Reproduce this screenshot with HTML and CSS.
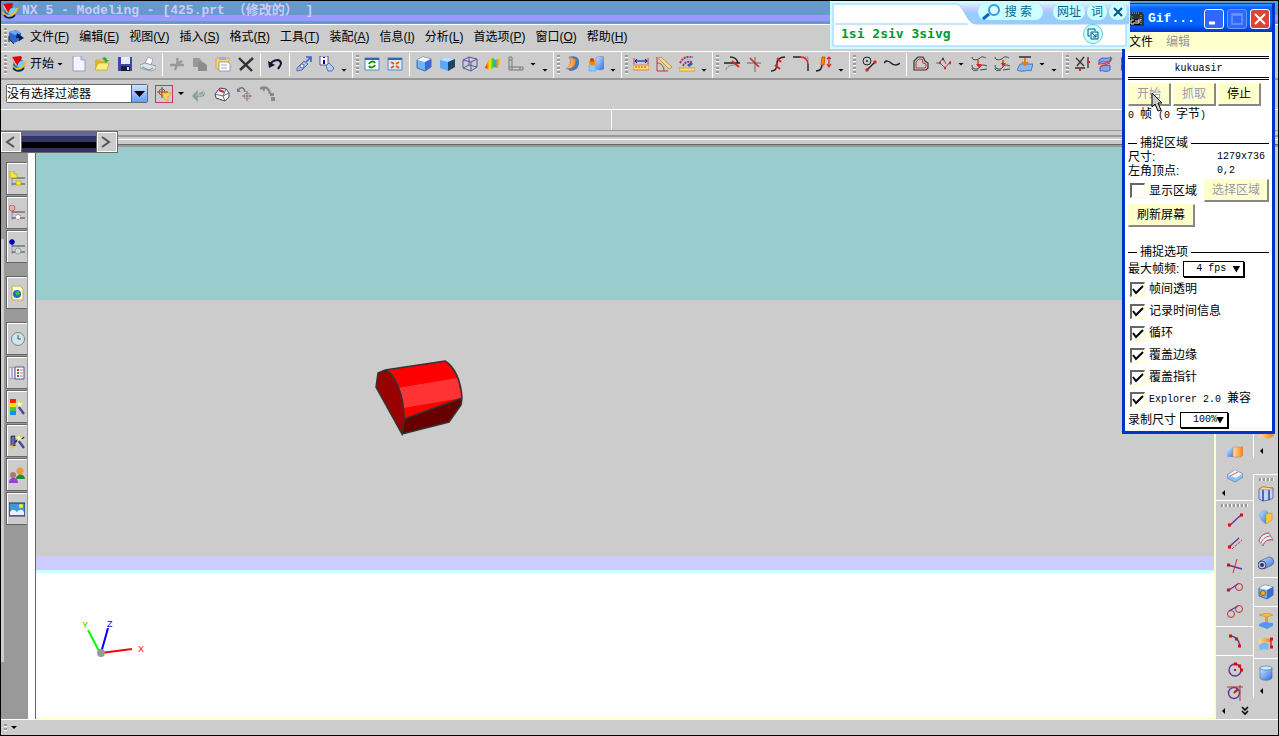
FILE: index.html
```html
<!DOCTYPE html>
<html lang="zh-CN">

<head>
    <meta charset="UTF-8">
    <meta name="viewport" content="width=device-width, initial-scale=1.0">
    <title>NX 5 - Modeling</title>
    <link rel="stylesheet" href="styles.css">
</head>

<body>
    <!-- 公用图形 -->
    <svg class="defs" width="0" height="0" aria-hidden="true">
        <defs>
            <linearGradient id="blue" x1="0" y1="0" x2="1" y2="1">
                <stop offset="0" stop-color="#cce6ff" />
                <stop offset="1" stop-color="#2f6fe0" />
            </linearGradient>
            <linearGradient id="orange" x1="0" y1="0" x2="1" y2="0">
                <stop offset="0" stop-color="#ffe0a0" />
                <stop offset="1" stop-color="#f08020" />
            </linearGradient>
            <linearGradient id="rainbow" x1="0" y1="0" x2="1" y2="0">
                <stop offset="0" stop-color="#f00" />
                <stop offset=".3" stop-color="#fe0" />
                <stop offset=".5" stop-color="#3c3" />
                <stop offset=".65" stop-color="#39f" />
                <stop offset=".8" stop-color="#f90" />
                <stop offset="1" stop-color="#ee0" />
            </linearGradient>
            <linearGradient id="ime-bg" x1="0" y1="0" x2="0" y2="1">
                <stop offset="0" stop-color="#ccffff" />
                <stop offset=".3" stop-color="#ccccff" />
                <stop offset=".5" stop-color="#99ccff" />
                <stop offset="1" stop-color="#99ccff" />
            </linearGradient>
            <symbol id="nx" viewBox="0 0 16 16">
                <circle cx="8" cy="9" r="6" fill="#27a" />
                <path d="M8 6l5-2 1 4-4 4-4-1z" fill="#7cf" />
                <path d="M1 9c2 6 12 5 14-4" fill="none" stroke="#fb2" stroke-width="2" />
                <path d="M2 12c3 4 8 4 11 0" fill="none" stroke="#024" stroke-width="1.5" />
                <path d="M1 1l9-1 1 2-5 7z" fill="#d00" />
                <path d="M1 1l5 8-1 1-4-6z" fill="#f9b" />
            </symbol>
            <symbol id="cube" viewBox="0 0 16 16">
                <path d="M1 4l6-3 8 2v8l-6 4-8-3z" fill="#6cb4ff" stroke="#357" stroke-width=".8" />
                <path d="M1 4l6-3 8 2-6 3z" fill="#f0faff" />
                <path d="M9 6l6-3v8l-6 4z" fill="#3a6cd8" />
            </symbol>
            <symbol id="wand" viewBox="0 0 16 16">
                <path d="M9 7l6 8" stroke="#44a" stroke-width="2.4" />
                <path d="M10 0l1 4 4-1-3 3 2 3-3-2-3 2 1-3-3-2 3 0z" fill="#ffc" stroke="#cc6" stroke-width=".5" />
            </symbol>
        </defs>
    </svg>

    <div class="titlebar">
        <svg class="ico"><use href="#nx" /></svg>
        <h1>NX 5 - Modeling - [425.prt （修改的） ]</h1>
    </div>

    <div class="menubar">
        <span class="grip"></span>
        <svg class="ico" viewBox="0 0 16 16"><path d="M1 3l7-2 5 3v7l-7 3-5-3z" fill="#36c" /><path d="M1 3l7-2 5 3-6 2z" fill="#6af" /><path d="M9 4l7 5-5 3v-3H8z" fill="#024" /><path d="M2 11l4 4M1 7v6" stroke="#024" /></svg>
        <nav>
            <a href="#">文件(<u>F</u>)</a>
            <a href="#">编辑(<u>E</u>)</a>
            <a href="#">视图(<u>V</u>)</a>
            <a href="#">插入(<u>S</u>)</a>
            <a href="#">格式(<u>R</u>)</a>
            <a href="#">工具(<u>T</u>)</a>
            <a href="#">装配(<u>A</u>)</a>
            <a href="#">信息(<u>I</u>)</a>
            <a href="#">分析(<u>L</u>)</a>
            <a href="#">首选项(<u>P</u>)</a>
            <a href="#">窗口(<u>O</u>)</a>
            <a href="#">帮助(<u>H</u>)</a>
        </nav>
    </div>

    <div class="toolbar">
        <div class="group">
            <span class="grip"></span>
            <button class="start"><svg class="ico"><use href="#nx" /></svg>开始<i class="arrow"></i></button>
            <button class="tool" aria-label="新建"><svg class="ico" viewBox="0 0 16 16"><path d="M2 0h8l4 4v11H2z" fill="#f4f6ff" stroke="#99c" /><path d="M10 0v4h4" fill="#ccd8f8" stroke="#99c" /></svg></button>
            <button class="tool" aria-label="打开"><svg class="ico" viewBox="0 0 16 16"><path d="M1 14V4l4-1 2 2h6v9z" fill="#e0b030" /><path d="M1 14l3-7h11l-2 7z" fill="#ffee80" stroke="#c90" stroke-width=".6" /><path d="M8 3c2-3 5-2 5 1l2 0-3 3-2-3z" fill="#3a3" /></svg></button>
            <button class="tool" aria-label="保存"><svg class="ico" viewBox="0 0 16 16"><path d="M1 1h14v14H1z" fill="#44a" /><path d="M4 1h9v7H4z" fill="#e4eeff" /><path d="M4 10h9v5H4z" fill="#123" /><path d="M10 11h2v3h-2z" fill="#ddd" /></svg></button>
            <button class="tool" aria-label="打印"><svg class="ico" viewBox="0 0 16 16"><path d="M5 7l3-6 5 2-2 6z" fill="#fff" stroke="#9ab" /><path d="M0 9l5-2 11 3v3l-5 2-11-3z" fill="#dde2e8" stroke="#789" stroke-width=".7" /><path d="M2 11l7 3 4-2" stroke="#699" fill="none" /></svg></button>
            <span class="sep"></span>
            <button class="tool" aria-label="剪切"><svg class="ico" viewBox="0 0 16 16"><path d="M1 9h14M8 2c2 4 0 7-2 12M13 5l-7 5" stroke="#999" stroke-width="2.4" fill="none" /></svg></button>
            <button class="tool" aria-label="复制"><svg class="ico" viewBox="0 0 16 16"><path d="M1 2h6l3 3v6H1z" fill="#999" /><path d="M6 6h5l4 3v6H6z" fill="#8c8c8c" /></svg></button>
            <button class="tool" aria-label="粘贴"><svg class="ico" viewBox="0 0 16 16"><path d="M1 2h13v11H1z" fill="#f4d860" stroke="#ca6" /><path d="M4 1h7v3H4z" fill="#aac" /><path d="M4 6h9l2 2v7H4z" fill="#fff" stroke="#88a" stroke-width=".8" /><path d="M6 9h6M6 12h6" stroke="#9ac" /></svg></button>
            <button class="tool" aria-label="删除"><svg class="ico" viewBox="0 0 16 16"><path d="M1 2l13 13M15 2L2 14" stroke="#333" stroke-width="2.4" /></svg></button>
            <span class="sep"></span>
            <button class="tool" aria-label="撤消"><svg class="ico" viewBox="0 0 16 16"><path d="M3 8c4-5 10-5 11-1 0 3-2 4-3 6" fill="none" stroke="#113" stroke-width="2" /><path d="M1 5l1 7 6-3z" fill="#113" /></svg></button>
            <span class="sep"></span>
            <button class="tool" aria-label="对象"><svg class="ico" viewBox="0 0 16 16"><path d="M1 12l7-7 4 3-6 6-5 1z" fill="#9ac0f8" stroke="#558" stroke-width=".8" /><path d="M10 6l4-4M10 1h5v5" stroke="#36c" stroke-width="1.6" fill="none" /><circle cx="6" cy="10" r="2" fill="#fff" stroke="#46a" /></svg></button>
            <button class="tool" aria-label="信息"><svg class="ico" viewBox="0 0 16 16"><path d="M1 0h8v9H1z" fill="#fff" stroke="#558" /><path d="M5 1v1M5 4v4" stroke="#00a" stroke-width="2" /><path d="M7 10l3-3 5 5-2 3-4 0z" fill="#acd0ff" stroke="#558" stroke-width=".8" /></svg></button>
            <i class="arrow more"></i>
        </div>
        <div class="group">
            <span class="grip"></span>
            <button class="tool" aria-label="刷新"><svg class="ico" viewBox="0 0 16 16"><path d="M1 2h14v12H1z" fill="#fff" stroke="#58c" /><path d="M1 2h14v2H1z" fill="#36b" /><path d="M5 8c1-3 5-3 6-1M11 9c-1 3-5 3-6 1" stroke="#090" stroke-width="2" fill="none" /></svg></button>
            <button class="tool" aria-label="适合窗口"><svg class="ico" viewBox="0 0 16 16"><path d="M1 2h14v12H1z" fill="#d8ecff" stroke="#58c" /><path d="M1 2h14v2H1z" fill="#36b" /><path d="M4 6l3 2M12 6L9 8M4 12l3-2M12 12l-3-2" stroke="#e50" stroke-width="2" /></svg></button>
            <span class="sep"></span>
            <button class="tool" aria-label="带边着色"><svg class="ico"><use href="#cube" /></svg></button>
            <button class="tool" aria-label="着色"><svg class="ico" viewBox="0 0 16 16"><path d="M1 4l6-3 9 2v8l-7 4-8-3z" fill="#5aa8ff" /><path d="M1 4l6-3 9 2-7 3z" fill="#b8e0ff" /><path d="M9 6l7-3v8l-7 4z" fill="#246" /></svg></button>
            <button class="tool" aria-label="线框"><svg class="ico" viewBox="0 0 16 16"><path d="M1 4l6-3 8 2v8l-6 4-8-3zM1 4l8 2 6-3M9 6v9M7 1v8l8 2M7 9l-6 3" fill="none" stroke="#55a" /></svg></button>
            <button class="tool" aria-label="面分析"><svg class="ico" viewBox="0 0 16 16"><path d="M0 12l4-9 4-1 2 2 6-2-3 10-4-1-4 3z" fill="url(#rainbow)" /></svg></button>
            <button class="tool" aria-label="视图方位"><svg class="ico" viewBox="0 0 16 16"><path d="M1 1h3v10h11v3H1zM1 4h3M1 11h3M4 11v3M12 11v3" fill="none" stroke="#777" /></svg></button>
            <i class="arrow drop"></i><i class="arrow more"></i>
        </div>
        <div class="group">
            <span class="grip"></span>
            <button class="tool" aria-label="曲面"><svg class="ico" viewBox="0 0 16 16"><path d="M4 1c6-2 11 1 10 6 0 5-4 8-9 8l-3-3c4-2 5-6 2-11z" fill="#47b" /><path d="M4 1l7 2c0 4-1 7-4 9l-6 1c4-3 6-7 3-12z" fill="url(#orange)" stroke="#b63" stroke-width=".6" /></svg></button>
            <button class="tool" aria-label="实体"><svg class="ico" viewBox="0 0 16 16"><path d="M8 2l3-2 5 1v12l-4 1-4-1z" fill="url(#blue)" stroke="#77b" stroke-width=".6" /><path d="M1 9h7v6H1z" fill="#8cf" stroke="#79c" stroke-width=".6" /><path d="M1 7c0-4 5-5 6-2v4H2z" fill="#f80" /><circle cx="4" cy="4" r="2" fill="#c40" /></svg></button>
            <i class="arrow more"></i>
        </div>
        <div class="group">
            <span class="grip"></span>
            <button class="tool" aria-label="测量距离"><svg class="ico" viewBox="0 0 16 16"><path d="M1 2v6M15 2v6" stroke="#c33" /><path d="M2 5h12M4 3L2 5l2 2M12 3l2 2-2 2" fill="none" stroke="#00a" /><path d="M0 9h16v5H0z" fill="#fd7" stroke="#c73" stroke-width=".8" /><path d="M3 10v2M6 10v2M9 10v2M12 10v2" stroke="#c50" /></svg></button>
            <button class="tool" aria-label="测量角度"><svg class="ico" viewBox="0 0 16 16"><path d="M1 1v14h11M1 7c4 0 7 3 7 8" fill="none" stroke="#c33" /><path d="M2 2l3-1 11 10-3 2z" fill="#fd7" stroke="#986" stroke-width=".8" /></svg></button>
            <button class="tool" aria-label="分析"><svg class="ico" viewBox="0 0 16 16"><path d="M1 7c3-5 6-7 13-6l-2 6-5-1-3 4z" fill="#9cf" /><path d="M1 7c3-5 6-7 13-6M4 10c2-4 5-5 9-4" fill="none" stroke="#b33" stroke-dasharray="2 1" stroke-width="2" /><path d="M8 9l4-3 2 2-4 3z" fill="#35a" /><path d="M0 12h16v3H0z" fill="#fd7" stroke="#a83" stroke-width=".6" /></svg></button>
            <i class="arrow more"></i>
        </div>
        <div class="group">
            <span class="grip"></span>
            <button class="tool" aria-label="修剪曲线"><svg class="ico" viewBox="0 0 16 16"><path d="M6 1c4 0 7 2 8 6M0 7h16" fill="none" stroke="#222" stroke-width="1.4" /><path d="M2 14c1-4 4-5 9-5" fill="none" stroke="#888" /><path d="M8 5l7 6" stroke="#d22" stroke-width="1.8" /></svg></button>
            <button class="tool" aria-label="修剪拐角"><svg class="ico" viewBox="0 0 16 16"><path d="M8 1v15M0 7h14" stroke="#666" /><path d="M3 2l9 9" stroke="#d22" stroke-width="1.6" /></svg></button>
            <button class="tool" aria-label="分割曲线"><svg class="ico" viewBox="0 0 16 16"><path d="M1 15c4 0 6-2 6-7s3-7 8-7" fill="none" stroke="#222" stroke-width="1.4" /><path d="M7 2l4 4M5 9l5 4" stroke="#d22" stroke-width="2" /></svg></button>
            <button class="tool" aria-label="圆角"><svg class="ico" viewBox="0 0 16 16"><path d="M0 1h8M15 8v7" stroke="#222" stroke-width="1.4" /><path d="M7 1c5 0 8 3 8 8" fill="none" stroke="#d22" stroke-width="1.6" /><path d="M10 1h5v6" fill="none" stroke="#777" stroke-dasharray="1 1" /></svg></button>
            <button class="tool" aria-label="拉长"><svg class="ico" viewBox="0 0 16 16"><path d="M0 15c5 0 6-3 6-7" fill="none" stroke="#222" stroke-width="1.6" /><path d="M6 1h3L8 9H5z" fill="#f80" stroke="#c40" stroke-width=".8" /><path d="M13 1v9M11 3l2-2 2 2M11 8l2 3 2-3" fill="none" stroke="#d22" stroke-width="1.2" /></svg></button>
            <i class="arrow more"></i>
        </div>
        <div class="group">
            <span class="grip"></span>
            <button class="tool" aria-label="偏置"><svg class="ico" viewBox="0 0 16 16"><circle cx="6" cy="5" r="4" fill="none" stroke="#222" /><path d="M5 5h2M6 4v2" stroke="#222" /><path d="M6 14l8-8" stroke="#222" stroke-width="1.5" /><circle cx="14" cy="6" r="1.7" fill="#d22" /><circle cx="6" cy="14" r="1.7" fill="#d22" /></svg></button>
            <button class="tool" aria-label="样条"><svg class="ico" viewBox="0 0 16 16"><path d="M0 7c2-3 5-2 7 0s6 3 9 0" fill="none" stroke="#222" stroke-width="1.5" /></svg></button>
            <span class="sep"></span>
            <button class="tool" aria-label="偏置曲线"><svg class="ico" viewBox="0 0 16 16"><path d="M1 14V5l4-4h5l2 4 3 2v5l-2 2z" fill="none" stroke="#333" stroke-width="1.2" /><path d="M3 12V6l3-3h3l1 4 3 1v3l-1 1z" fill="none" stroke="#c33" /></svg></button>
            <button class="tool" aria-label="投影"><svg class="ico" viewBox="0 0 16 16"><path d="M0 7l4 0 5 5 6-7M3 7l4-5 3 6" fill="none" stroke="#666" /><path d="M3 7h2M8 12h2M13 7h2" stroke="#d22" stroke-width="2.4" /><path d="M6 3h2" stroke="#444" stroke-width="2.4" /></svg></button>
            <i class="arrow drop"></i>
            <button class="tool" aria-label="桥接"><svg class="ico" viewBox="0 0 16 16"><path d="M1 1c0 4 6 3 8 1s4-1 6 0M1 9c0 5 6 5 8 2s4-2 7-1M1 12c0 3 4 3 6 2M9 14l7-1" fill="none" stroke="#444" /><path d="M7 4v5" stroke="#e60" stroke-width="2" /><path d="M5 8h6l-3 4z" fill="#d22" /></svg></button>
            <button class="tool" aria-label="组合"><svg class="ico" viewBox="0 0 16 16"><path d="M1 1c0 4 6 3 8 1s4-1 6 0M1 9c0 5 6 5 8 2s4-2 7-1M1 12c0 3 4 3 6 2M9 14l7-1" fill="none" stroke="#444" /><path d="M9 4v4" stroke="#e60" stroke-width="2" /><path d="M7 7h5l-3 4z" fill="#d22" /></svg></button>
            <button class="tool" aria-label="抽取"><svg class="ico" viewBox="0 0 16 16"><path d="M0 14l3-6 13 0-2 7c-4-2-8 2-14-1z" fill="#8be" stroke="#35a" stroke-width=".7" /><path d="M2 1h12" stroke="#222" stroke-width="1.4" /><path d="M8 2v5M5 6l3 3 3-3" fill="none" stroke="#e70" stroke-width="1.8" /></svg></button>
            <i class="arrow drop"></i><i class="arrow more"></i>
        </div>
        <div class="group">
            <span class="grip"></span>
            <button class="tool" aria-label="点集"><svg class="ico" viewBox="0 0 16 16"><path d="M2 2l8 8M10 1L3 10M1 12h10M14 1v11" fill="none" stroke="#333" stroke-width="1.3" /><path d="M13 6h3M6 12v3" stroke="#d22" stroke-width="2" /></svg></button>
            <button class="tool" aria-label="曲面组"><svg class="ico" viewBox="0 0 16 16"><path d="M2 4c4-4 7 0 12-3v4c-4 3-8-1-12 2zM3 11c4-4 6 0 10-2v5c-4 3-6 0-10 1z" fill="#7ae" stroke="#34b" stroke-width=".8" /><path d="M1 8c5 0 10 0 14-6M3 11l10-4" fill="none" stroke="#d33" stroke-width="1.3" /></svg></button>
            <button class="tool" aria-label="播放"><svg class="ico" viewBox="0 0 16 16"><path d="M1 1l6 3-6 4z" fill="#292" /><path d="M1 8l6 3-6 4z" fill="#c22" /></svg></button>
        </div>
    </div>

    <div class="filterbar">
        <span class="filter">
            <select aria-label="选择过滤器">
                <option>没有选择过滤器</option>
            </select>
            <span class="filter-arrow"></span>
        </span>
        <button class="tool" aria-label="过滤"><svg class="ico framed" viewBox="0 0 16 16"><path d="M6 1v11M1 6h11" stroke="#644" /><circle cx="6" cy="6" r="3" fill="none" stroke="#b44" /><path d="M6 7h9l-3 4v4l-3-2z" fill="#fd3" stroke="#c90" stroke-width=".6" /></svg></button>
        <i class="arrow drop"></i>
        <button class="tool" aria-label="返回"><svg class="ico" viewBox="0 0 16 16"><path d="M4 10h6c3 0 4-2 2-5M6 6l-4 4 4 4z" fill="#8a9e9c" stroke="#8a9e9c" stroke-width="1.6" /><path d="M5 9h5c2 0 3-1 2-4" fill="none" stroke="#ccc" /></svg></button>
        <button class="tool" aria-label="擦除"><svg class="ico" viewBox="0 0 16 16"><path d="M1 8l5-6 6 1 3 4v4l-4 4-9-3z" fill="#f6f6fc" stroke="#445" /><path d="M1 8l8 2 6-3M9 10l2 5M9 10l3-7" fill="none" stroke="#667" /><path d="M5 4l5 2" stroke="#d22" stroke-width="2" /></svg></button>
        <button class="tool" aria-label="定位"><svg class="ico" viewBox="0 0 16 16"><path d="M1 5c2-5 6-4 7 1" fill="none" stroke="#778" stroke-width="1.6" /><path d="M0 2v4h4z" fill="#778" /><circle cx="10" cy="10" r="3" fill="none" stroke="#a88" /><path d="M10 5v10M5 10h10" stroke="#877" /></svg></button>
        <button class="tool" aria-label="列表"><svg class="ico" viewBox="0 0 16 16"><path d="M0 3c4-3 9-2 10 5" fill="none" stroke="#888" stroke-width="2.4" /><path d="M1 1l5 0-2 5z" fill="#888" /><path d="M10 7h4v3h-4zM11 11h4v4h-4z" fill="#888" /></svg></button>
    </div>

    <div class="infobar"><span></span><span></span></div>

    <div class="rail">
        <div class="pager">
            <button aria-label="向左"><svg viewBox="0 0 16 16"><path d="M12 3L5 8l7 5" /></svg></button>
            <span class="pager-track"></span>
            <button aria-label="向右"><svg viewBox="0 0 16 16"><path d="M4 3l7 5-7 5" /></svg></button>
        </div>
    </div>

    <div class="workspace">
        <aside class="resources">
            <button aria-label="装配导航器"><svg class="ico" viewBox="0 0 16 16"><path d="M3 6v9" stroke="#88c" /><path d="M3 7h13M3 13h13" stroke="#444" /><path d="M1 0h4v3h3v4H1zM7 10h5v4H7z" fill="#ee3" stroke="#a90" stroke-width=".6" /></svg></button>
            <button aria-label="约束导航器"><svg class="ico" viewBox="0 0 16 16"><path d="M3 6v9" stroke="#88c" /><path d="M3 7h13M3 13h13" stroke="#444" /><circle cx="3" cy="3" r="3" fill="#eaa" stroke="#a44" stroke-width=".6" /><circle cx="9" cy="12" r="2.5" fill="#fff" stroke="#a66" stroke-dasharray="2 1" /></svg></button>
            <button aria-label="部件导航器"><svg class="ico" viewBox="0 0 16 16"><path d="M3 4v11" stroke="#88c" /><path d="M3 7h13M3 13h13" stroke="#444" /><path d="M0 3h6M1 1l4 4M5 1L1 5M3 0v6" stroke="#00a" stroke-width="1.5" /><circle cx="9" cy="12" r="3" fill="#cdd" stroke="#889" stroke-width=".8" /></svg></button>
            <button class="spaced" aria-label="浏览器"><svg class="ico" viewBox="0 0 16 16"><path d="M3 1h8l3 3v11H3z" fill="#ffc" stroke="#ca5" /><circle cx="8" cy="9" r="4" fill="#26c" /><path d="M6 7l4-1 1 3-3 2z" fill="#4b4" /></svg></button>
            <button class="spaced" aria-label="历史"><svg class="ico" viewBox="0 0 16 16"><circle cx="9" cy="8" r="6.5" fill="#cde4ec" stroke="#788" /><path d="M9 4v4h3" fill="none" stroke="#456" /></svg></button>
            <button aria-label="系统材料"><svg class="ico" viewBox="0 0 16 16"><path d="M0 2l3 1v11l-3-1zM3 2l3 1v11l-3-1z" fill="#eef" stroke="#88a" stroke-width=".7" /><path d="M6 2h9v12H6z" fill="#fff" stroke="#559" /><path d="M8 5h2M8 11h2" stroke="#d22" stroke-width="2" /><path d="M8 8h2" stroke="#2a2" stroke-width="2" /><path d="M11 5h3M11 8h3M11 11h3" stroke="#889" /></svg></button>
            <button aria-label="可视化"><svg class="ico" viewBox="0 0 16 16"><path d="M1 0h6v4H1z" fill="#f20" /><path d="M1 4h6v4H1z" fill="#fd0" /><path d="M1 8h6v4H1z" fill="#4c4" /><path d="M1 12h6v4H1z" fill="#28f" /><use href="#wand" /></svg></button>
            <button aria-label="模板"><svg class="ico" viewBox="0 0 16 16"><path d="M2 3h4v10H2z" fill="#66a" stroke="#224" stroke-width=".8" /><path d="M6 9l9-5" stroke="#222" stroke-width="2" /><use href="#wand" /><path d="M1 14h5M3 12v4" stroke="#fb4" stroke-width="1.6" /></svg></button>
            <button aria-label="角色"><svg class="ico" viewBox="0 0 16 16"><circle cx="11" cy="4" r="3.5" fill="#e93" /><path d="M7 12c0-6 9-6 9 0z" fill="#283" /><circle cx="4" cy="8" r="3" fill="#a77" /><path d="M0 16c0-7 9-7 9 0z" fill="#94c" /></svg></button>
            <button aria-label="场景"><svg class="ico" viewBox="0 0 16 16"><path d="M0 2h16v13H0z" fill="#49c" stroke="#235" /><path d="M1 11c3-4 5-2 7 0 2-3 5-3 7 0v3H1z" fill="#eef" /><circle cx="12" cy="5" r="2" fill="#fe3" /></svg></button>
        </aside>

        <main class="canvas">
            <svg class="part" viewBox="0 0 90 76">
                <path d="M10 10L70 1c10 6 16 20 17 37L29 59z" fill="#f00" />
                <path d="M22 28l60-10 5 20-58 10z" fill="#f33" />
                <path d="M1 27L3 13l7-3c10 4 19 24 19 49l-2 15z" fill="#900" />
                <path d="M29 59l58-21-1 7-12 17-47 12z" fill="#600" />
                <path d="M1 27L3 13l7-3c10 4 19 24 19 49l-2 15zM10 10L70 1c10 6 16 20 17 37l-1 7-12 17-47 12M29 59l58-21" fill="none" stroke="#333" stroke-width="1.5" />
            </svg>
            <svg class="triad" viewBox="0 0 70 42">
                <path d="M21 34l31-4" stroke="#f00" stroke-width="2" />
                <path d="M20 34L8 11" stroke="#0f0" stroke-width="2" />
                <path d="M21 34l7-25" stroke="#00f" stroke-width="2" />
                <circle cx="21" cy="34" r="4" fill="#999" />
                <text x="2" y="9" fill="#0d0">Y</text>
                <text x="27" y="8" fill="#00f">Z</text>
                <text x="58" y="33" fill="#f00">X</text>
            </svg>
        </main>

        <div class="side">
            <div class="sidebar end">
                <button class="tool" aria-label="拉伸"><svg class="ico" viewBox="0 0 16 16"><path d="M0 4h8v9H0z" fill="url(#blue)" /><path d="M6 3h10v8l-2 2H6z" fill="url(#orange)" stroke="#c84" stroke-width=".6" /></svg></button>
                <button class="tool" aria-label="片体"><svg class="ico" viewBox="0 0 16 16"><path d="M0 8l8-5 8 4v3l-8 5-8-4z" fill="#8bc0f4" stroke="#669" stroke-width=".6" /><path d="M1 8l7-5 7 4-6 4z" fill="#eef4ff" /><path d="M3 9l8-4" stroke="#c66" /></svg></button>
                <span class="back"></span>
            </div>
            <div class="sidebar">
                <span class="hgrip"></span>
                <button class="tool" aria-label="直线"><svg class="ico" viewBox="0 0 16 16"><path d="M2 14L14 3" stroke="#639" stroke-width="1.4" /><path d="M1 13h3M13 3h3" stroke="#c11" stroke-width="3" /></svg></button>
                <button class="tool" aria-label="平行线"><svg class="ico" viewBox="0 0 16 16"><path d="M2 12L12 3" stroke="#639" stroke-width="1.4" /><path d="M5 14l10-9" stroke="#c33" stroke-dasharray="3 1" /><path d="M1 12h3" stroke="#c11" stroke-width="3" /></svg></button>
                <button class="tool" aria-label="垂线"><svg class="ico" viewBox="0 0 16 16"><path d="M1 7l14 4" stroke="#639" stroke-width="1.4" /><path d="M10 1L6 15" stroke="#c33" /><path d="M0 7h3" stroke="#c11" stroke-width="3" /></svg></button>
                <button class="tool" aria-label="切线"><svg class="ico" viewBox="0 0 16 16"><path d="M2 9l9-6" stroke="#639" stroke-width="1.4" /><circle cx="12" cy="6" r="3.5" fill="none" stroke="#b33" /><path d="M0 9h3" stroke="#c11" stroke-width="3" /></svg></button>
                <button class="tool" aria-label="公切线"><svg class="ico" viewBox="0 0 16 16"><path d="M2 7l9-5" stroke="#639" stroke-width="1.4" /><circle cx="12" cy="5" r="3.5" fill="none" stroke="#b33" /><circle cx="4" cy="10" r="3.5" fill="none" stroke="#b33" /></svg></button>
                <span class="hsep"></span>
                <button class="tool" aria-label="圆弧"><svg class="ico" viewBox="0 0 16 16"><path d="M3 3c6 0 9 4 10 10" fill="none" stroke="#639" stroke-width="1.4" /><path d="M2 3h3M8 6h3M11 13h3" stroke="#c11" stroke-width="3" /></svg></button>
                <span class="hsep"></span>
                <button class="tool" aria-label="三点圆"><svg class="ico" viewBox="0 0 16 16"><circle cx="8" cy="8" r="6" fill="none" stroke="#639" stroke-width="1.4" /><path d="M7 8h2" stroke="#639" stroke-width="2" /><path d="M7 2h3M11 4h3M13 8h3" stroke="#c11" stroke-width="3" /></svg></button>
                <button class="tool" aria-label="相切圆"><svg class="ico" viewBox="0 0 16 16"><circle cx="7" cy="8" r="5.5" fill="none" stroke="#639" stroke-width="1.4" /><path d="M0 2h16M13 0v16" stroke="#b33" /><path d="M7 8l4-4" stroke="#c11" stroke-width="2" /></svg></button>
                <div class="side-end"><span class="back"></span><svg viewBox="0 0 8 10"><path d="M1 1l3 3 3-3M1 5l3 3 3-3" fill="none" stroke="#000" stroke-width="1.6" /></svg></div>
            </div>
        </div>
        <div class="side narrow">
            <div class="sidebar end">
                <button class="tool" aria-label="曲面"><svg class="ico" viewBox="0 0 16 16"><path d="M0 13l5-8 8 1 3 5-6 3-4-2z" fill="url(#orange)" /></svg></button>
                <span class="back"></span>
            </div>
            <div class="sidebar last">
                <span class="hgrip"></span>
                <button class="tool" aria-label="直纹"><svg class="ico" viewBox="0 0 16 16"><path d="M1 3l4-2 10 1v10l-4 2-6 1-4-2z" fill="#bcd4ff" stroke="#558" stroke-width=".8" /><path d="M5 4v11M11 4v10" stroke="#339" stroke-width="1.4" /><path d="M1 3l4-2 10 1-4 2z" fill="#fd8" stroke="#a83" stroke-width=".6" /></svg></button>
                <button class="tool" aria-label="通过曲线"><svg class="ico" viewBox="0 0 16 16"><path d="M1 5l5-4 4 2-2 12-5-4z" fill="url(#blue)" stroke="#79c" stroke-width=".5" /><path d="M8 5l6-1v7l-6 4z" fill="#fc3" stroke="#c83" stroke-width=".6" /></svg></button>
                <button class="tool" aria-label="网格"><svg class="ico" viewBox="0 0 16 16"><path d="M1 9c0-4 5-8 10-8l4 7c-6-1-9 2-10 6z" fill="#e0ecff" stroke="#77b" stroke-width=".8" /><path d="M1 9c1-5 6-8 10-8M5 14c1-5 5-7 10-6M3 11c2-5 6-7 10-7" fill="none" stroke="#c55" /></svg></button>
                <button class="tool" aria-label="扫掠"><svg class="ico" viewBox="0 0 16 16"><path d="M2 6l9-4c5 0 6 6 3 8l-8 4z" fill="url(#blue)" stroke="#446" stroke-width=".6" /><circle cx="4" cy="10" r="4" fill="#bbc8e6" stroke="#225" stroke-width=".8" /><circle cx="4" cy="10" r="2" fill="#336" /></svg></button>
                <span class="hsep"></span>
                <button class="tool" aria-label="孔"><svg class="ico" viewBox="0 0 16 16"><use href="#cube" /><circle cx="5" cy="9" r="2.5" fill="#fa2" stroke="#a50" /></svg></button>
                <span class="hsep"></span>
                <button class="tool" aria-label="拔模"><svg class="ico" viewBox="0 0 16 16"><path d="M1 2l8-2 6 2-6 2z" fill="#fb4" stroke="#c82" stroke-width=".6" /><path d="M7 4h3v6H7z" fill="#e93" /><path d="M1 11l5-2 9 1v3l-6 3-8-3z" fill="#59e" /></svg></button>
                <button class="tool" aria-label="修剪片体"><svg class="ico" viewBox="0 0 16 16"><path d="M1 9c2-3 6-3 10-1l-1 6c-3-1-6-1-8 1z" fill="#7be" /><path d="M0 5c4-4 8-3 13-2v4C9 5 5 5 2 9z" fill="url(#orange)" /><path d="M13 2v10" stroke="#b11" stroke-width="1.2" /><path d="M12 3h3M12 11h3" stroke="#d11" stroke-width="3" /></svg></button>
                <span class="hsep"></span>
                <button class="tool" aria-label="圆柱"><svg class="ico" viewBox="0 0 16 16"><path d="M2 3v10c2 3 10 3 12 0V3z" fill="url(#blue)" stroke="#36a" stroke-width=".6" /><ellipse cx="8" cy="3" rx="6" ry="2" fill="#cef" stroke="#36a" stroke-width=".6" /></svg></button>
                <span class="back"></span>
            </div>
        </div>
    </div>

    <div class="statusbar"><span class="grip"></span><i class="arrow"></i></div>

    <!-- 输入法窗口 -->
    <div class="ime">
        <svg class="ime-frame" viewBox="0 0 300 48" preserveAspectRatio="none">
            <path d="M0 0h300v48H0z" fill="#cff" />
            <path d="M126 1h173v22H146c-10 0-12-20-20-20z" fill="url(#ime-bg)" />
            <path d="M3 3h123c8 0 10 20 20 20h150v22H3z" fill="#fff" stroke="#9cf" />
            <path d="M5 23h133" stroke="#9cf" />
        </svg>
        <div class="ime-head">
            <button class="ime-search"><svg viewBox="0 0 18 16"><path d="M1 15l6-5" stroke="#06c" stroke-width="3" /><circle cx="12" cy="6" r="5" fill="#dff" stroke="#39e" stroke-width="2" /></svg>搜 索</button>
            <button>网址</button>
            <button>词</button>
            <button aria-label="关闭"><svg viewBox="0 0 10 10"><path d="M1 1l8 8M9 1L1 9" stroke="#058" stroke-width="2" /></svg></button>
        </div>
        <div class="ime-body">
            <span>1si 2siv 3sivg</span>
            <button aria-label="切换"><svg viewBox="0 0 12 12"><path d="M1 1h7v2M1 1v7h2M4 4h7v7H4zM5 5l4 4M6 9h3V6" fill="none" stroke="#058" /></svg></button>
        </div>
    </div>

    <!-- 录制窗口 -->
    <section class="recorder">
        <header>
            <svg class="ico" viewBox="0 0 16 16"><path d="M0 1h13l2 3v11H0z" fill="#333" /><path d="M1 2h10M1 5h2v2H1zM12 4v9" stroke="#6cc" stroke-dasharray="1 1" /><path d="M1 8h10v6H1z" fill="#000" /><path d="M5 9H2v4h3v-2M7 9v4M12 9H9v4M9 11h2" fill="none" stroke="#fff" /></svg>
            <h2>Gif...</h2>
            <button aria-label="最小化"><svg viewBox="0 0 18 18"><path d="M4 13h6" stroke="#fff" stroke-width="3" /></svg></button>
            <button class="dim" aria-label="最大化"><svg viewBox="0 0 18 18"><path d="M4 4h10v10H4zM4 5h10" fill="none" stroke="#69f" stroke-width="1.5" /></svg></button>
            <button class="close" aria-label="关闭"><svg viewBox="0 0 18 18"><path d="M4 4l10 10M14 4L4 14" stroke="#fff" stroke-width="2" /></svg></button>
        </header>
        <nav><a href="#">文件</a><a href="#" class="off">编辑</a></nav>
        <div class="rec-body">
            <p class="rec-name mono">kukuasir</p>
            <div class="rec-btns">
                <button disabled>开始</button>
                <button disabled>抓取</button>
                <button>停止</button>
            </div>
            <p class="count"><span class="mono">0 </span>帧<span class="mono"> (0 </span>字节<span class="mono">)</span></p>

            <h3>捕捉区域</h3>
            <dl>
                <dt>尺寸:</dt>
                <dd class="mono">1279x736</dd>
                <dt>左角顶点:</dt>
                <dd class="mono">0,2</dd>
            </dl>
            <div class="area">
                <label><input type="checkbox">显示区域</label>
                <button disabled>选择区域</button>
            </div>
            <button class="refresh">刷新屏幕</button>

            <h3>捕捉选项</h3>
            <div class="line">
                <label for="fps">最大帧频:</label>
                <span class="pick"><select id="fps" class="mono"><option>4 fps</option></select></span>
            </div>
            <label class="opt"><input type="checkbox" checked>帧间透明</label>
            <label class="opt"><input type="checkbox" checked>记录时间信息</label>
            <label class="opt"><input type="checkbox" checked>循环</label>
            <label class="opt"><input type="checkbox" checked>覆盖边缘</label>
            <label class="opt"><input type="checkbox" checked>覆盖指针</label>
            <label class="opt"><input type="checkbox" checked><span><span class="mono">Explorer 2.0 </span>兼容</span></label>
            <div class="line">
                <label for="size">录制尺寸</label>
                <span class="pick small"><select id="size" class="mono"><option>100%</option></select></span>
            </div>
        </div>
        <svg class="cursor" viewBox="0 0 12 20"><path d="M1 1v14l3-3 3 7 3-1-3-7h4z" fill="#ccc" stroke="#000" /></svg>
    </section>
</body>

</html>
```
FILE: styles.css
```css
* {
    box-sizing: border-box;
}

body {
    margin: 0;
    height: 100vh;
    display: flex;
    flex-direction: column;
    overflow: hidden;
    position: relative;
    border: 1px solid #000;
    background: #ccc;
    color: #000;
    font: 12px/14px "Liberation Sans", "Noto Sans CJK SC", sans-serif;
}

h1, h2, h3, p, dl, dd {
    margin: 0;
    font-size: 12px;
    font-weight: normal;
}

a {
    color: #000;
    text-decoration: none;
}

button {
    padding: 0;
    border: 0;
    background: none;
    color: inherit;
    font: inherit;
}

select {
    appearance: none;
    border: 0;
    color: #000;
    font: inherit;
}

.defs {
    position: absolute;
}

.ico {
    width: 16px;
    height: 16px;
    flex: none;
    display: block;
}

.mono,
select.mono {
    font-family: "Liberation Mono", monospace;
    font-size: 10px;
    white-space: pre;
}

/* 标题栏 */
.titlebar {
    height: 23px;
    flex: none;
    display: flex;
    align-items: center;
    gap: 4px;
    padding: 0 1px 4px;
    background: linear-gradient(#69c 14px, #99f 14px, #99f 20px, #69c 20px);
}

.titlebar h1 {
    color: #ccf;
    font: bold 13px/18px "Liberation Mono", "Noto Sans CJK SC", monospace;
    white-space: pre;
}

/* 菜单 */
.menubar {
    height: 27px;
    flex: none;
    display: flex;
    align-items: center;
    padding-bottom: 2px;
    border-top: 1px solid #fff;
}

.menubar nav {
    display: flex;
    gap: 10px;
    padding-left: 6px;
}

/* 一列小方点 */
.grip {
    width: 3px;
    height: 19px;
    flex: none;
    margin: 0 1px 0 3px;
    background: repeating-linear-gradient(#999 0, #999 2px, #fff 2px, #fff 3px, #ccc 3px, #ccc 4px);
}

/* 工具栏 */
.toolbar {
    height: 29px;
    flex: none;
    display: flex;
    border-bottom: 2px solid #999;
    overflow: hidden;
}

.group {
    flex: none;
    display: flex;
    align-items: center;
    padding-bottom: 2px;
    border-top: 1px solid #fff;
    border-left: 1px solid #fff;
}

.group:first-child {
    border-left: 0;
}

.tool {
    width: 23px;
    height: 23px;
    flex: none;
    display: flex;
    align-items: center;
    justify-content: center;
}

.start {
    width: 59px;
    display: flex;
    align-items: center;
    gap: 3px;
    padding-left: 3px;
}

.sep {
    width: 6px;
    height: 23px;
    flex: none;
    background: linear-gradient(90deg, transparent 3px, #fff 3px, #fff 4px, transparent 4px);
}

.arrow {
    flex: none;
    width: 6px;
    height: 3px;
    background: #000;
    clip-path: polygon(0 0, 100% 0, 50% 100%);
}

.arrow.drop {
    margin: 0 3px;
}

.arrow.more {
    margin: 12px 5px 0 3px;
}

.filterbar {
    height: 29px;
    flex: none;
    display: flex;
    align-items: center;
    padding: 0 5px 2px;
}

.filter {
    width: 142px;
    height: 19px;
    display: flex;
    position: relative;
    margin-right: 4px;
    border: 1px solid #666;
    border-radius: 2px;
}

.filter select {
    width: 100%;
    padding: 0;
    background: #fff;
}

.filter-arrow {
    position: absolute;
    right: 0;
    top: 0;
    width: 16px;
    height: 17px;
    border-left: 1px solid #369;
    background: linear-gradient(#cce6ff, #69f);
    pointer-events: none;
}

.filter-arrow::after {
    content: "";
    display: block;
    margin: 6px 2px;
    height: 6px;
    background: #000;
    clip-path: polygon(0 0, 100% 0, 50% 100%);
}

.framed {
    outline: 1px solid #c36;
}

.infobar {
    height: 22px;
    flex: none;
    display: flex;
    border-top: 1px solid #fff;
    border-bottom: 1px solid #999;
}

.infobar span {
    flex: 667;
}

.infobar span:first-child {
    flex: 610;
    border-right: 1px solid #fff;
}

.rail {
    height: 16px;
    flex: none;
    position: relative;
    z-index: 1;
    background: linear-gradient(#ccc 4px, #999 4px, #999 6px, #ccc 6px, #ccc 8px, #fff 8px, #fff 9px, #ccc 9px, #ccc 13px, #666 13px, #666 14px, #999 14px);
}

.pager {
    width: 117px;
    height: 22px;
    display: flex;
    border: 1px solid #666;
    border-left: 0;
    background: #ccc;
}

.pager button {
    width: 20px;
    border: 1px solid #fff;
}

.pager svg {
    width: 16px;
    height: 16px;
    display: block;
    fill: none;
    stroke: #555;
    stroke-width: 2;
}

.pager-track {
    flex: 1;
    border: solid #666;
    border-width: 0 1px;
    background: linear-gradient(#669 4px, #336 4px, #336 10px, #000 10px, #000 16px, #336 16px);
}

/* 工作区 */
.workspace {
    flex: 1;
    min-height: 0;
    display: flex;
}

.resources {
    width: 35px;
    flex: none;
    display: flex;
    flex-direction: column;
    gap: 1px;
    padding: 15px 8px 0 5px;
    border-right: 1px solid #666;
    background:
        linear-gradient(transparent 16%, #ccc 16%, #ccc 90%, transparent 90%) left / 3px 100% no-repeat,
        linear-gradient(90deg, #999 27px, #fff 27px);
}

.resources button {
    height: 33px;
    flex: none;
    padding-left: 2px;
    border: 1px solid #666;
    border-right: 0;
    background: #ccc;
    box-shadow: inset 1px 1px 0 #fff;
}

.resources .spaced {
    margin-top: 12px;
}

.canvas {
    flex: 1;
    position: relative;
    border-right: 2px solid #ffc;
    border-bottom: 1px solid #ffc;
    background: linear-gradient(#9cc 26.8%, #ccc 26.8%, #ccc 71.6%, #ccf 71.6%, #ccf 74.1%, #cff 74.1%, #cff 74.6%, #fff 74.6%);
}

.part {
    position: absolute;
    left: 339px;
    top: 213px;
    width: 90px;
    height: 76px;
}

.triad {
    position: absolute;
    left: 44px;
    top: 472px;
    width: 70px;
    height: 42px;
    font-size: 9px;
}

.side {
    width: 37px;
    flex: none;
    display: flex;
    flex-direction: column;
    justify-content: flex-end;
    padding-bottom: 1px;
}

.narrow {
    width: 25px;
    padding-bottom: 21px;
}

.sidebar {
    display: flex;
    flex-direction: column;
    align-items: center;
    border-top: 1px solid #fff;
}

.narrow .sidebar {
    border-left: 1px solid #fff;
}

.narrow .end {
    margin-bottom: 16px;
}

.sidebar.end {
    border-top: 0;
}

.hgrip {
    width: 27px;
    height: 3px;
    margin: 3px 0 1px;
    background: repeating-linear-gradient(90deg, #999 0, #999 2px, #fff 2px, #fff 3px, #ccc 3px, #ccc 4px);
}

.narrow .hgrip {
    width: 15px;
}

.hsep {
    width: 100%;
    height: 6px;
    background: linear-gradient(transparent 3px, #fff 3px, #fff 4px, transparent 4px);
}

.back {
    align-self: flex-start;
    width: 3px;
    height: 6px;
    margin: 4px 6px;
    background: #000;
    clip-path: polygon(100% 0, 100% 100%, 0 50%);
}

.side-end {
    width: 100%;
    display: flex;
    align-items: center;
}

.side-end svg {
    width: 8px;
    height: 10px;
    margin-left: 10px;
}

.statusbar {
    height: 16px;
    flex: none;
    display: flex;
    align-items: center;
    gap: 3px;
    border-top: 1px solid #fff;
}

.statusbar .grip {
    height: 8px;
}

/* 输入法 */
.ime {
    position: absolute;
    z-index: 3;
    left: 829px;
    top: 0;
    width: 300px;
    height: 48px;
    color: #069;
}

.ime-frame {
    position: absolute;
    width: 100%;
    height: 100%;
}

.ime-head {
    position: relative;
    display: flex;
    justify-content: flex-end;
    gap: 2px;
    padding: 3px 3px 0;
}

.ime-head button {
    height: 16px;
    padding: 0 4px;
    border-radius: 8px;
    background: #cff;
}

.ime-head button svg {
    width: 10px;
    height: 10px;
    display: block;
}

.ime-head .ime-search {
    display: flex;
    gap: 5px;
    align-items: center;
    margin-right: 8px;
    padding: 0 11px 0 4px;
}

.ime-head .ime-search svg {
    width: 18px;
    height: 16px;
}

.ime-body {
    position: relative;
    display: flex;
    justify-content: space-between;
    align-items: center;
    padding: 4px 27px 0 11px;
    color: #093;
    font: bold 13px/16px "DejaVu Sans Mono", monospace;
}

.ime-body button {
    width: 20px;
    height: 20px;
    padding: 3px;
    border: 1px solid #6cc;
    border-radius: 50%;
    background: #cff;
}

.ime-body svg {
    display: block;
}

/* 录制窗口 */
.recorder {
    position: absolute;
    z-index: 2;
    left: 1121px;
    top: 2px;
    width: 153px;
    border: solid #03c;
    border-width: 1px 3px 3px;
    background: #fff;
}

.recorder header {
    height: 28px;
    display: flex;
    align-items: center;
    gap: 3px;
    padding: 2px 2px 0 4px;
    background: linear-gradient(#39f, #06f 4px, #06f 20px, #03c);
    color: #fff;
}

.recorder h2 {
    flex: 1;
    font: bold 13px/16px "Liberation Mono", monospace;
}

.recorder header button {
    width: 20px;
    height: 20px;
    border: 1px solid #fff;
    border-radius: 3px;
    background: #36f;
}

.recorder header .dim {
    border-color: #69f;
}

.recorder header .close {
    background: #d43;
}

.recorder header button svg {
    display: block;
}

.recorder nav {
    height: 19px;
    display: flex;
    gap: 13px;
    padding: 3px 4px 0;
    background: #ffc;
}

.recorder .off {
    color: #999;
}

.rec-body {
    padding: 5px 3px 2px;
}

.rec-name {
    height: 24px;
    border: double #000;
    border-width: 3px 0;
    text-align: center;
    line-height: 20px;
}

.rec-body button {
    height: 23px;
    padding: 0 8px;
    border: solid;
    border-width: 1px 2px 2px 1px;
    border-color: #ffc #888 #888 #ffc;
    background: #ffc;
}

.rec-body button:disabled {
    color: #999;
    text-shadow: 1px 1px 0 #fff;
}

.rec-btns {
    display: flex;
    gap: 2px;
    padding-top: 3px;
}

.count {
    padding-top: 1px;
    white-space: nowrap;
}

.rec-body h3 {
    display: flex;
    align-items: center;
    gap: 3px;
    margin-top: 13px;
}

.rec-body h3::before,
.rec-body h3::after {
    content: "";
    width: 9px;
    height: 1px;
    background: #000;
}

.rec-body h3::after {
    flex: 1;
}

.rec-body dl {
    display: grid;
    grid-template-columns: 89px 1fr;
}

.rec-body label {
    display: flex;
    align-items: center;
    white-space: nowrap;
}

.rec-body input {
    appearance: none;
    width: 15px;
    height: 15px;
    margin: 0 4px 0 2px;
    border: solid;
    border-width: 2px 1px 1px 2px;
    border-color: #666 #ffc #ffc #666;
    background: #fff;
}

.rec-body input:checked {
    background: url("data:image/svg+xml,%3Csvg xmlns='http://www.w3.org/2000/svg' viewBox='0 0 12 12'%3E%3Cpath d='M1 5l3 4 7-7' fill='none' stroke='%23000' stroke-width='2'/%3E%3C/svg%3E");
}

.area {
    display: flex;
    justify-content: space-between;
    padding: 1px 0 2px;
}

.area button {
    padding: 0 7px;
}

.opt {
    height: 22px;
}

.refresh {
    margin-bottom: 5px;
}

.line {
    display: flex;
    align-items: center;
    gap: 4px;
    height: 19px;
}

.pick {
    width: 61px;
    height: 16px;
    display: flex;
    position: relative;
    border: 1px solid #000;
    box-shadow: 1px 1px 0 #000;
}

.small {
    width: 48px;
}

.pick select {
    width: 100%;
    padding: 0 0 0 12px;
    background: #fff;
}

.pick::after {
    content: "";
    position: absolute;
    right: 3px;
    top: 4px;
    width: 8px;
    height: 7px;
    background: #000;
    clip-path: polygon(0 0, 100% 0, 50% 100%);
    pointer-events: none;
}

.cursor {
    position: absolute;
    left: 26px;
    top: 88px;
    width: 12px;
    height: 20px;
}
```
